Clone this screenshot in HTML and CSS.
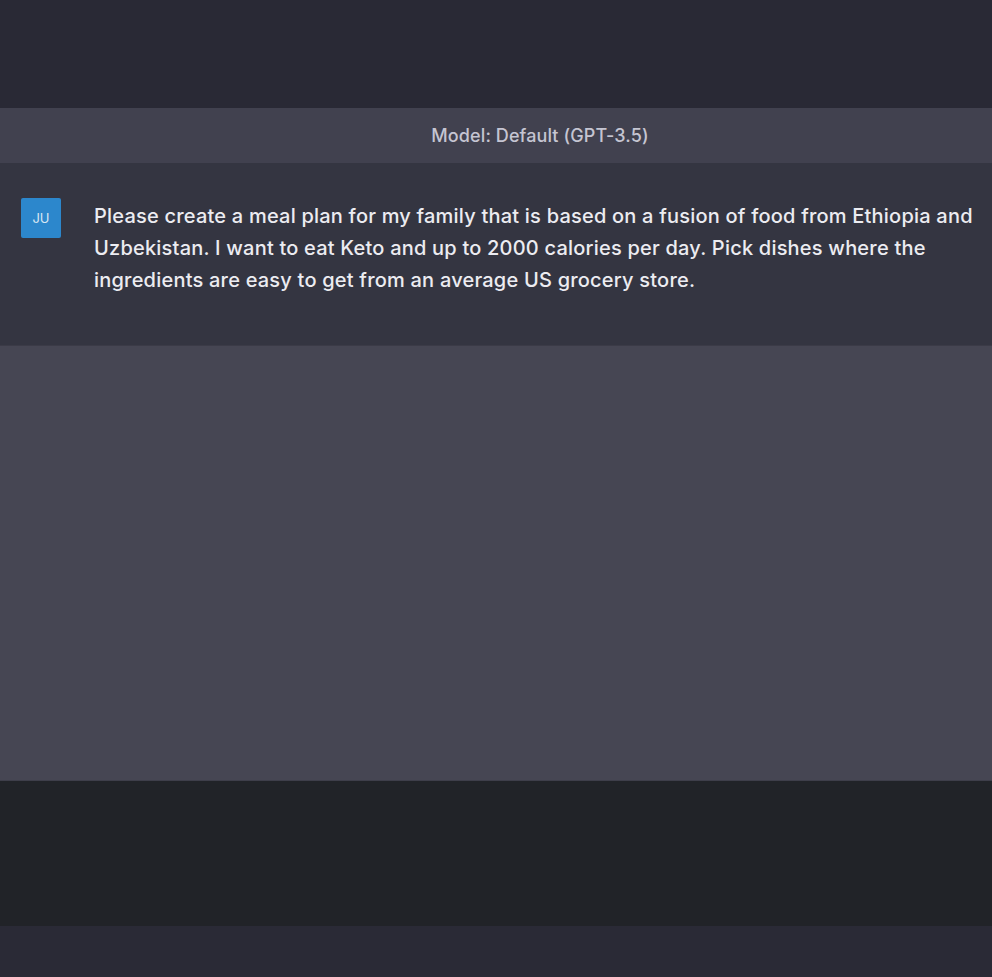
FILE: index.html
```html
<!DOCTYPE html>
<html>
<head>
<meta charset="utf-8">
<link rel="stylesheet" href="styles.css">
</head>
<body>
<div class="page">
  <div class="topband"></div>
  <div class="modelbar"><span class="modeltext">Model: Default (GPT-3.5)</span></div>
  <div class="msg">
    <div class="avatar">JU</div>
    <div class="msgtext">Please create a meal plan for my family that is based on a fusion of food from Ethiopia and Uzbekistan. I want to eat Keto and up to 2000 calories per day. Pick dishes where the ingredients are easy to get from an average US grocery store.</div>
  </div>
  <div class="answer"></div>
  <div class="footer"></div>
  <div class="bottom"></div>
</div>
</body>
</html>
```
FILE: styles.css
```css
html, body { margin: 0; padding: 0; }
body { background: #2a2a36; font-family: Inter, "Noto Sans", sans-serif; }
.page { display: flex; flex-direction: column; height: 977px; }
.topband { height: 108px; background: #292935; }
.modelbar { height: 55px; background: #41414f; display: flex; align-items: center; justify-content: center; padding-left: 88px; box-sizing: border-box; }
.modeltext { color: #c5c5d2; font-size: 18px; font-weight: 500; letter-spacing: 0.1px; }
.msg { height: 182px; background: #343541; box-sizing: border-box; display: flex; padding: 35px 4px 0 21px; gap: 33px; }
.avatar { width: 40px; height: 40px; flex: none; background: #2c87cc; border-radius: 2px; color: #d8e6f3; font-size: 13px; display: flex; align-items: center; justify-content: center; }
.msgtext { color: #ececf1; font-size: 20px; font-weight: 500; line-height: 32px; margin-top: 2px; letter-spacing: 0.21px; }
.answer { height: 435px; background: #464653; border-top: 1px solid #3b3b47; box-sizing: border-box; }
.footer { height: 146px; background: #212328; border-top: 1px solid #3e3e4a; box-sizing: border-box; }
.bottom { flex: 1; background: #2a2a36; }
```
